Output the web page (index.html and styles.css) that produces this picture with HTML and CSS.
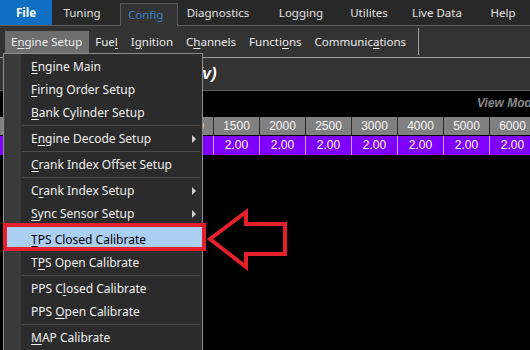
FILE: index.html
```html
<!DOCTYPE html>
<html lang="en">
<head>
    <meta charset="UTF-8">
    <meta name="viewport" content="width=device-width, initial-scale=1.0">
    <title>Config - Engine Setup</title>
    <link rel="stylesheet" href="styles.css">
</head>
<body>
    <div class="tabs">
        <span class="tab file">File</span>
        <span class="tab w60">Tuning</span>
        <span class="tab open">Config</span>
        <span class="tab w80">Diagnostics</span>
        <span class="tab w86">Logging</span>
        <span class="tab w50">Utilites</span>
        <span class="tab w86">Live Data</span>
        <span class="tab w46">Help</span>
    </div>
    <div class="toolbar">
        <span class="tool active">E<u>n</u>gine Setup</span>
        <span class="tool">Fue<u>l</u></span>
        <span class="tool">I<u>g</u>nition</span>
        <span class="tool">C<u>h</u>annels</span>
        <span class="tool">Functi<u>o</u>ns</span>
        <span class="tool">Communic<u>a</u>tions</span>
        <span class="sep"></span>
    </div>
    <div class="title">Injector Dead Time Table (v)</div>
    <div class="viewbar"><span>View Mode</span></div>
    <div class="grid">
        <div class="hd first"></div>
        <div class="hd">500</div>
        <div class="hd">750</div>
        <div class="hd">1000</div>
        <div class="hd">1250</div>
        <div class="hd">1500</div>
        <div class="hd">2000</div>
        <div class="hd">2500</div>
        <div class="hd">3000</div>
        <div class="hd">4000</div>
        <div class="hd">5000</div>
        <div class="hd">6000</div>
        <div class="val first"></div>
        <div class="val">2.00</div>
        <div class="val">2.00</div>
        <div class="val">2.00</div>
        <div class="val">2.00</div>
        <div class="val">2.00</div>
        <div class="val">2.00</div>
        <div class="val">2.00</div>
        <div class="val">2.00</div>
        <div class="val">2.00</div>
        <div class="val">2.00</div>
        <div class="val">2.00</div>
    </div>

    <div class="menu">
        <div class="item"><span><u>E</u>ngine Main</span></div>
        <div class="item"><span><u>F</u>iring Order Setup</span></div>
        <div class="item"><span><u>B</u>ank Cylinder Setup</span></div>
        <div class="line"></div>
        <div class="item"><span>E<u>n</u>gine Decode Setup</span><i class="more"></i></div>
        <div class="line"></div>
        <div class="item"><span><u>C</u>rank Index Offset Setup</span></div>
        <div class="line"></div>
        <div class="item"><span>C<u>r</u>ank Index Setup</span><i class="more"></i></div>
        <div class="item"><span><u>S</u>ync Sensor Setup</span><i class="more"></i></div>
        <div class="item hover"><span><u>T</u>PS Closed Calibrate</span></div>
        <div class="item"><span>T<u>P</u>S Open Calibrate</span></div>
        <div class="line"></div>
        <div class="item"><span>PPS C<u>l</u>osed Calibrate</span></div>
        <div class="item"><span>PPS <u>O</u>pen Calibrate</span></div>
        <div class="line"></div>
        <div class="item"><span><u>M</u>AP Calibrate</span></div>
    </div>
    <div class="mark"></div>
    <svg class="arrow" width="86" height="66" viewBox="0 0 86 66">
        <polygon points="5,31 41,4 41,16 80,16 80,46 41,46 41,59" fill="none" stroke="#e3202b" stroke-width="4"/>
    </svg>
</body>
</html>
```

FILE: styles.css
```css
*{
    box-sizing: border-box;
    margin: 0;
    padding: 0;
}
body{
    width: 530px;
    height: 350px;
    overflow: hidden;
    position: relative;
    background-color: black;
    font-family: "Noto Sans", "Open Sans", sans-serif;
    font-size: 12px;
    color: #ececec;
}
u{
    text-underline-offset: 2px;
}

/* top tabs */
.tabs{
    height: 26px;
    display: flex;
    background-color: #282828;
    border-bottom: 1px solid #5c5c5c;
    font-size: 11.5px;
}
.tab{
    flex-shrink: 0;
    line-height: 25px;
    text-align: center;
    color: #e2e2e2;
    white-space: nowrap;
}
.w46{ width: 46px; }
.w50{ width: 50px; }
.w60{ width: 60px; }
.w80{ width: 80px; }
.w86{ width: 86px; }
.tab.file{
    width: 52px;
    font-weight: bold;
    color: white;
    background-color: #0f6fc2;
}
.tab.open{
    width: 58px;
    height: 23px;
    margin: 3px 0 -1px 8px;
    padding-left: 7px;
    line-height: 21px;
    text-align: left;
    color: #3a82c4;
    background-color: #333333;
    border: 1px solid #5c5c5c;
    border-bottom: none;
}

/* second row */
.toolbar{
    height: 32px;
    display: flex;
    align-items: center;
    padding-left: 5px;
    font-size: 11.5px;
    background-color: #333333;
    border-bottom: 1px solid #a6a6a6;
}
.tool{
    height: 22px;
    line-height: 21px;
    padding: 0 7px 0 6px;
    white-space: nowrap;
}
.tool.active{
    background-color: #6e6e6e;
}
.sep{
    width: 1px;
    height: 27px;
    margin-left: 5px;
    background-color: #a6a6a6;
}

.title{
    height: 33px;
    padding-left: 4px;
    line-height: 31px;
    font-family: "Liberation Sans", sans-serif;
    font-size: 16px;
    font-weight: bold;
    font-style: italic;
    color: white;
    white-space: nowrap;
    background-color: #333333;
    border-bottom: 1px solid #5e5e5e;
}
.viewbar{
    height: 26px;
    padding-left: 477px;
    line-height: 24px;
    font-family: "Liberation Sans", sans-serif;
    font-weight: bold;
    font-style: italic;
    color: #8a8a8a;
    white-space: nowrap;
}

/* table */
.grid{
    display: grid;
    grid-template-columns: 29px repeat(11, 46px);
    grid-template-rows: 18px 19px;
    row-gap: 1px;
    font-family: "Liberation Sans", sans-serif;
    font-size: 12px;
}
.hd{
    background-color: #808080;
    border-left: 1px solid #2c2c2c;
    text-align: center;
    line-height: 18px;
    color: #f4f4f4;
}
.val{
    background-color: #8000ff;
    border-left: 1px solid #c99cff;
    text-align: center;
    line-height: 19px;
    color: white;
}
.first{
    border-left: none;
}

/* dropdown */
.menu{
    position: absolute;
    left: 3px;
    top: 53px;
    width: 200px;
    padding: 1px 0;
    border: 1px solid #8e8e8e;
    background: linear-gradient(to right, #3a3a3a 17px, #2b2b2b 17px);
}
.item{
    height: 23px;
    line-height: 22px;
    padding-left: 27px;
    display: flex;
    align-items: center;
    white-space: nowrap;
    color: #f0f0f0;
}
.item.hover{
    height: 26px;
    padding-top: 3px;
    background-color: #abcff3;
    color: black;
}
.more{
    margin-left: auto;
    margin-right: 6px;
    width: 0;
    height: 0;
    border-left: 4px solid #cfcfcf;
    border-top: 4px solid transparent;
    border-bottom: 4px solid transparent;
}
.line{
    height: 3px;
    margin-left: 18px;
    margin-right: 2px;
    border-top: 1px solid #4d4d4d;
    position: relative;
    top: 1px;
}

/* annotation */
.mark{
    position: absolute;
    left: 3px;
    top: 223px;
    width: 203px;
    height: 28px;
    border: 4px solid #e3202b;
}
.arrow{
    position: absolute;
    left: 205px;
    top: 208px;
}
```
